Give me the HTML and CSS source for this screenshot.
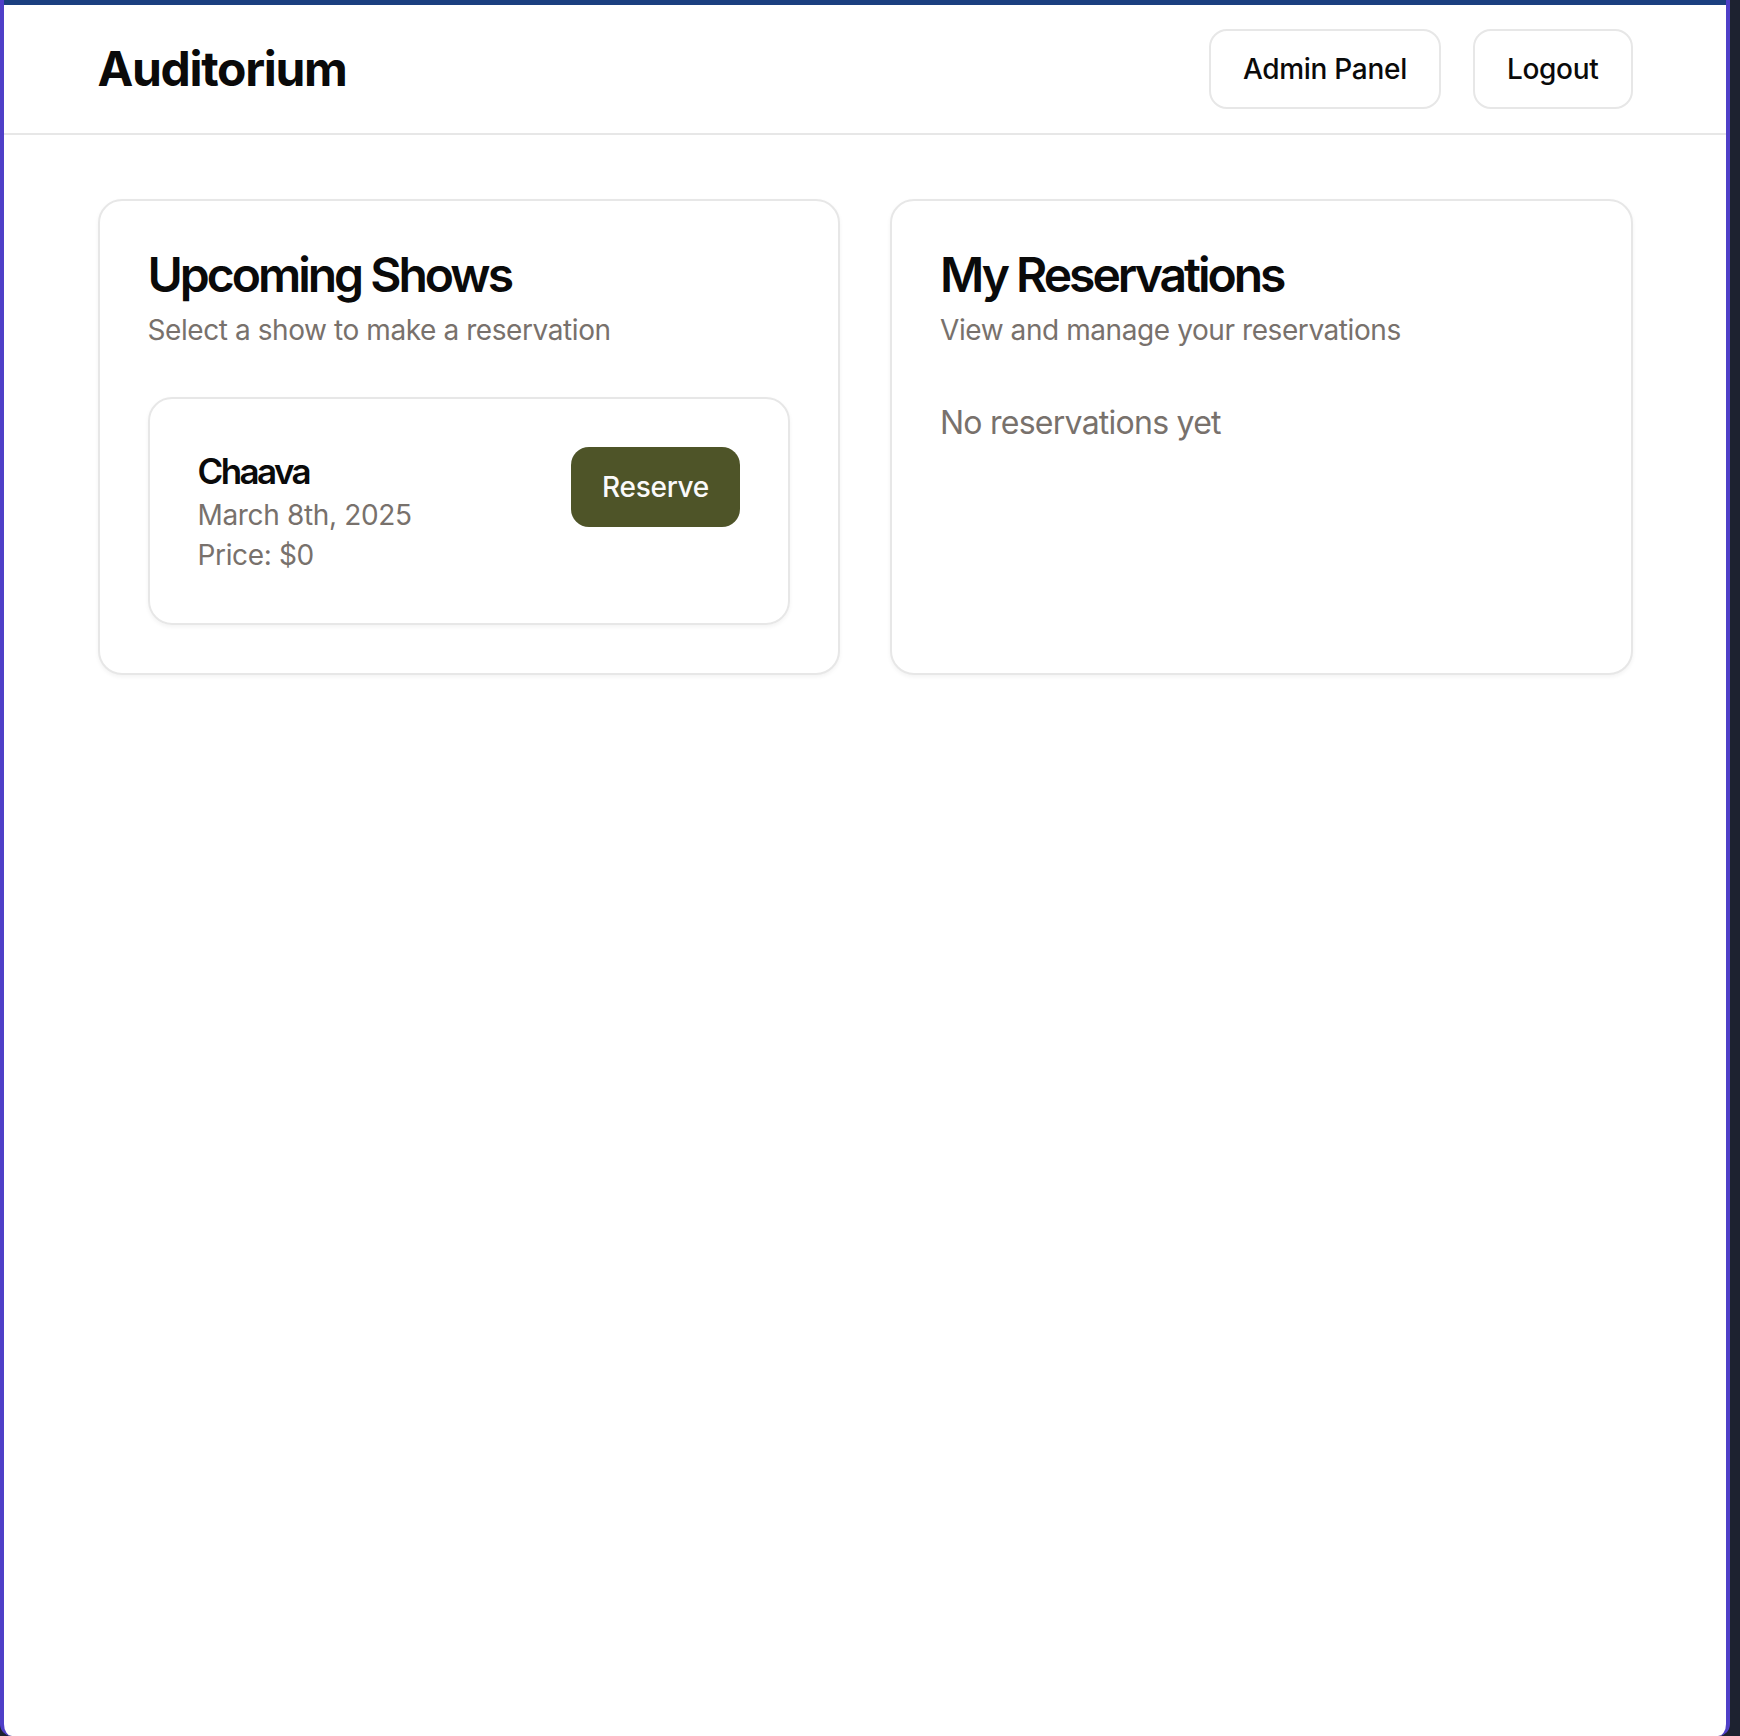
FILE: index.html
```html
<!DOCTYPE html>
<html lang="en">
<head>
<meta charset="utf-8">
<title>Auditorium</title>
<link rel="stylesheet" href="styles.css">
</head>
<body>
<div class="frame">
  <div class="topbar"></div>
  <header class="header">
    <div class="container header-inner">
      <h1 class="logo">Auditorium</h1>
      <nav class="nav">
        <button class="btn btn-outline">Admin Panel</button>
        <button class="btn btn-outline">Logout</button>
      </nav>
    </div>
  </header>
  <main class="container main">
    <div class="grid">
      <section class="card">
        <div class="card-header">
          <h2 class="card-title">Upcoming Shows</h2>
          <p class="card-desc">Select a show to make a reservation</p>
        </div>
        <div class="card-content">
          <div class="show">
            <div class="show-info">
              <h3 class="show-title">Chaava</h3>
              <p class="show-meta">March 8th, 2025</p>
              <p class="show-meta">Price: $0</p>
            </div>
            <button class="btn btn-primary">Reserve</button>
          </div>
        </div>
      </section>
      <section class="card">
        <div class="card-header">
          <h2 class="card-title">My Reservations</h2>
          <p class="card-desc">View and manage your reservations</p>
        </div>
        <div class="card-content">
          <p class="empty">No reservations yet</p>
        </div>
      </section>
    </div>
  </main>
</div>
</body>
</html>
```
FILE: styles.css
```css
* { box-sizing: border-box; }
html, body { margin: 0; padding: 0; }
body {
  background: #1d2230;
  font-family: Inter, "Noto Sans", sans-serif;
  color: #0a0a0a;
  width: 1740px;
  height: 1736px;
  overflow: hidden;
}
h1, h2, h3, p { margin: 0; }

.frame {
  width: 1730px;
  height: 1736px;
  background: #ffffff;
  border-left: 4px solid #4f3fc8;
  border-right: 4px solid #4f3fc8;
  border-radius: 0 0 12px 12px;
  overflow: hidden;
}
.topbar { height: 5px; background: #1b3f80; }

.container { width: 1535px; margin: 0 auto; }

.header { height: 130px; border-bottom: 2px solid #e7e7e7; }
.header-inner {
  height: 100%;
  display: flex;
  align-items: center;
  justify-content: space-between;
}
.logo {
  font-size: 48px;
  font-weight: 700;
  line-height: 64px;
  letter-spacing: -1.3px;
}
.nav { display: flex; gap: 32px; }

.btn {
  font-family: inherit;
  font-size: 28px;
  font-weight: 500;
  height: 80px;
  padding: 0 32px;
  border-radius: 18px;
  cursor: pointer;
  letter-spacing: -0.3px;
}
.btn-outline {
  background: #ffffff;
  color: #0a0a0a;
  border: 2px solid #e7e7e7;
}
.btn-primary {
  background: #4e5428;
  color: #fafafa;
  border: none;
  font-weight: 500;
  padding: 0 31px;
}

.main { padding-top: 64px; }
.grid {
  display: grid;
  grid-template-columns: 1fr 1fr;
  gap: 50px;
}
.card {
  border: 2px solid #e7e7e7;
  border-radius: 24px;
  background: #ffffff;
  box-shadow: 0 2px 4px rgba(0, 0, 0, 0.05);
}
.card-header {
  padding: 50px 48px 47px;
  display: flex;
  flex-direction: column;
  gap: 11px;
}
.card-title {
  font-size: 48px;
  font-weight: 600;
  line-height: 48px;
  letter-spacing: -3px;
}
.card-desc {
  font-size: 28px;
  line-height: 40px;
  color: #78716c;
  letter-spacing: -0.42px;
}
.card-content { padding: 0 48px 48px; }

.show {
  border: 2px solid #e7e7e7;
  border-radius: 24px;
  padding: 48px;
  display: flex;
  justify-content: space-between;
  align-items: flex-start;
  box-shadow: 0 2px 4px rgba(0, 0, 0, 0.05);
}
.show-title {
  font-size: 35px;
  font-weight: 600;
  line-height: 48px;
  letter-spacing: -2.6px;
}
.show-meta {
  font-size: 28px;
  line-height: 40px;
  color: #78716c;
  letter-spacing: -0.35px;
}
.empty {
  font-size: 32px;
  line-height: 48px;
  padding-top: 2px;
  color: #78716c;
  letter-spacing: -0.75px;
}
```
